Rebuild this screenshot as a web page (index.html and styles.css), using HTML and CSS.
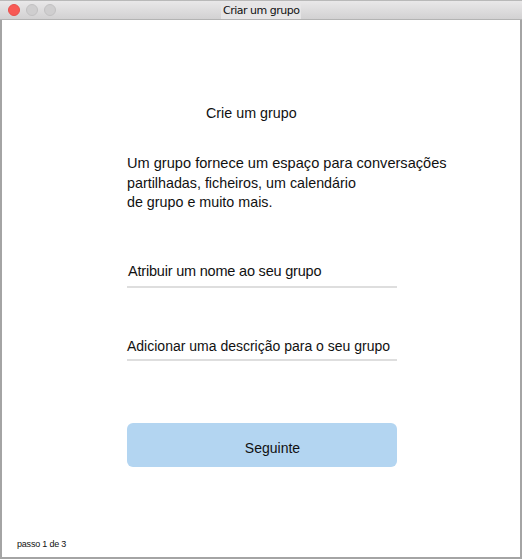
FILE: index.html
```html
<!DOCTYPE html>
<html lang="pt">
<head>
<meta charset="utf-8">
<title>Criar um grupo</title>
<link rel="stylesheet" href="styles.css">
</head>
<body>
<div class="window">
  <div class="titlebar">
    <div class="lights">
      <span class="light red"></span>
      <span class="light gray"></span>
      <span class="light gray"></span>
    </div>
    <div class="title-tab">Criar um grupo</div>
    <div></div>
  </div>
  <div class="content">
    <div class="main">
      <h1 class="heading">Crie um grupo</h1>
      <div class="intro">
        <div class="intro-first">Um grupo fornece um espaço para conversações</div>
        <div class="intro-rest">partilhadas, ficheiros, um calendário<br>de grupo e muito mais.</div>
      </div>
      <div class="field field-name">Atribuir um nome ao seu grupo</div>
      <div class="field field-desc">Adicionar uma descrição para o seu grupo</div>
      <button class="next-btn" type="button">Seguinte</button>
    </div>
    <div class="footer">passo 1 de 3</div>
  </div>
</div>
</body>
</html>
```

FILE: styles.css
```css
html, body {
  margin: 0;
  padding: 0;
  background: #ffffff;
}

body {
  font-family: "Liberation Sans", Arial, sans-serif;
  color: #1a1a1a;
}

.window {
  width: 522px;
  height: 559px;
  box-sizing: border-box;
  border-left: 2px solid #a4a4a4;
  border-right: 2px solid #a4a4a4;
  border-bottom: 2px solid #a4a4a4;
  display: flex;
  flex-direction: column;
  background: #ffffff;
}

.titlebar {
  height: 20px;
  box-sizing: border-box;
  border-top: 1px solid #b9b9b9;
  border-bottom: 1px solid #b3b3b3;
  background: linear-gradient(#e9e8e9, #d2d1d2);
  display: grid;
  grid-template-columns: 1fr auto 1fr;
  align-items: end;
  margin: 0 -2px;
  padding: 0 2px;
}

.lights {
  display: flex;
  gap: 6px;
  align-self: center;
  padding-left: 6px;
}

.light {
  width: 12px;
  height: 12px;
  border-radius: 50%;
  box-sizing: border-box;
}

.light.red {
  background: #f85955;
  border: 1px solid #e8504c;
}

.light.gray {
  background: #cfcecf;
  border: 1px solid #c2c1c2;
}

.title-tab {
  background: #e6e5e6;
  font-family: "DejaVu Sans", Tahoma, sans-serif;
  font-size: 11px;
  letter-spacing: -0.5px;
  line-height: 15px;
  height: 16px;
  padding: 0 7px 0 2px;
  color: #111;
  width: 71px;
  white-space: nowrap;
}

.content {
  flex: 1;
  display: flex;
  flex-direction: column;
}

.main {
  padding-left: 125px;
  width: 270px;
  display: flex;
  flex-direction: column;
}

.heading {
  margin: 85px 0 0 79px;
  font-size: 14.3px;
  font-weight: normal;
  line-height: 17px;
  color: #111;
}

.intro {
  margin-top: 31px;
  color: #111;
  white-space: nowrap;
}

.intro-first {
  font-size: 14.6px;
  line-height: 20px;
}

.intro-rest {
  font-size: 14.3px;
  line-height: 19px;
  padding-top: 1px;
}

.field {
  line-height: 17px;
  border-bottom: 2px solid #dedede;
  color: #111;
  white-space: nowrap;
}

.field-name {
  margin-top: 51px;
  padding-left: 1px;
  font-size: 14.5px;
  letter-spacing: -0.2px;
  padding-bottom: 6px;
}

.field-desc {
  margin-top: 50px;
  font-size: 14px;
  padding-bottom: 4px;
}

.next-btn {
  margin-top: 62px;
  height: 44px;
  width: 270px;
  border: none;
  border-radius: 6px;
  background: #b3d5f1;
  font-family: "Liberation Sans", Arial, sans-serif;
  font-size: 14px;
  color: #111;
  padding: 6px 0 0 21px;
  cursor: pointer;
}

.footer {
  margin-top: auto;
  padding: 0 0 7px 15px;
  font-size: 9px;
  line-height: 11px;
  color: #111;
  letter-spacing: -0.2px;
}
```
